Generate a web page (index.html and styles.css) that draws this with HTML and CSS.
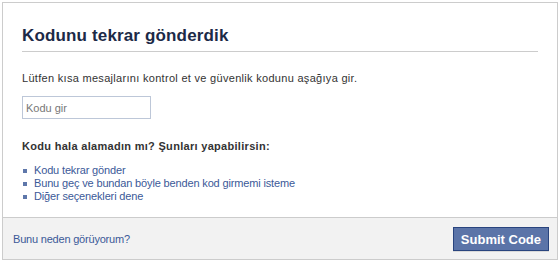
FILE: index.html
```html
<!DOCTYPE html>
<html>
<head>
    <meta charset='utf-8' />
    <title>Kodunu tekrar gönderdik</title>
    <link rel="stylesheet" href="styles.css">
</head>
<body>
    <div class='dialog'>
        <div class='dialog-body'>
            <h2 class='dialog-title'>Kodunu tekrar gönderdik</h2>
            <p class='intro'>Lütfen kısa mesajlarını kontrol et ve güvenlik kodunu aşağıya gir.</p>
            <input class='code-input' type='text' placeholder='Kodu gir' />
            <div class='help-title'>Kodu hala alamadın mı? Şunları yapabilirsin:</div>
            <ul class='options'>
                <li><a href='#'>Kodu tekrar gönder</a></li>
                <li><a href='#'>Bunu geç ve bundan böyle benden kod girmemi isteme</a></li>
                <li><a href='#'>Diğer seçenekleri dene</a></li>
            </ul>
        </div>
        <div class='dialog-footer'>
            <a href='#' class='why'>Bunu neden görüyorum?</a>
            <button class='submit'>Submit Code</button>
        </div>
    </div>
</body>
</html>
```

FILE: styles.css
```css
body {
    margin: 2px;
    background: #fff;
    font-family: 'Liberation Sans', Arial, sans-serif;
    font-size: 11px;
    color: #333;
}

.dialog {
    width: 554px;
    border: 1px solid #ccc;
}

.dialog-body {
    padding: 23px 19px 14px 19px;
}

.dialog-title {
    margin: 0;
    padding: 0 0 5px 0;
    font-size: 17px;
    letter-spacing: 0.15px;
    font-weight: bold;
    color: #1c2a47;
    border-bottom: 1px solid #ccc;
}

.intro {
    margin: 20px 0 12px 0;
    letter-spacing: 0.3px;
}

.code-input {
    display: block;
    box-sizing: border-box;
    width: 129px;
    height: 23px;
    margin: 0;
    padding: 3px;
    border: 1px solid #bdc7d8;
    font-family: 'Liberation Sans', Arial, sans-serif;
    font-size: 11px;
}

.code-input::placeholder {
    color: #777;
}

.help-title {
    margin: 21px 0 12px 0;
    font-weight: bold;
    letter-spacing: 0.3px;
}

.options {
    margin: 0;
    padding: 0 0 0 12px;
    list-style: none;
    letter-spacing: -0.15px;
}

.options li {
    position: relative;
    line-height: 13px;
}

.options li::before {
    content: '';
    position: absolute;
    left: -11px;
    top: 5px;
    width: 4px;
    height: 4px;
    background: #5e77aa;
}

a {
    color: #3b5998;
    text-decoration: none;
}

.dialog-footer {
    display: flex;
    align-items: center;
    justify-content: space-between;
    padding: 9px 8px 8px 10px;
    background: #f2f2f2;
    border-top: 1px solid #ccc;
}

.why {
    letter-spacing: -0.2px;
}

.submit {
    height: 24px;
    padding: 0 7px;
    background: #5b74a8;
    border: 1px solid #29447e;
    color: #fff;
    font-family: 'Liberation Sans', Arial, sans-serif;
    font-size: 13px;
    font-weight: bold;
    box-shadow: 0 1px 0 rgba(0, 0, 0, 0.1);
}
```
